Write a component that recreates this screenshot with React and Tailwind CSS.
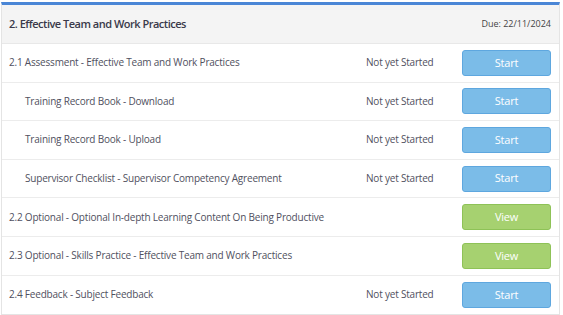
import React from "react";

const rows = [
  { label: "2.1 Assessment - Effective Team and Work Practices", status: "Not yet Started", action: "Start" },
  { label: "Training Record Book - Download", status: "Not yet Started", action: "Start", indent: true },
  { label: "Training Record Book - Upload", status: "Not yet Started", action: "Start", indent: true },
  { label: "Supervisor Checklist - Supervisor Competency Agreement", status: "Not yet Started", action: "Start", indent: true },
  { label: "2.2 Optional - Optional In-depth Learning Content On Being Productive", status: "", action: "View" },
  { label: "2.3 Optional - Skills Practice - Effective Team and Work Practices", status: "", action: "View" },
  { label: "2.4 Feedback - Subject Feedback", status: "Not yet Started", action: "Start" },
];

function ActionButton({ action }) {
  const cls =
    action === "View"
      ? "bg-[#a6d170] border-[#8ec257]"
      : "bg-[#7bbce8] border-[#5ea7df]";
  return (
    <button className={`${cls} border w-[89px] h-[26px] rounded-[3px] text-white text-[11px]`}>
      {action}
    </button>
  );
}

export default function App() {
  return (
    <div className="w-[563px] h-[315px] bg-white pt-[2px] px-[1px] font-['Open_Sans',sans-serif] text-[#505060]">
      <div className="w-[559px] border-t-[3px] border-[#4a86d6] border-x border-b border-x-[#e4e4e4] border-b-[#e4e4e4]">
        <div className="h-[39px] bg-[#f4f4f4] flex items-center justify-between pl-[7px] pr-[8px] border-b border-[#e8e8e8]">
          <span className="text-[11px] tracking-[-0.5px] font-semibold text-[#3a3a4a]">2. Effective Team and Work Practices</span>
          <span className="text-[9px] text-[#444]">Due: 22/11/2024</span>
        </div>
        {rows.map((r, i) => (
          <div
            key={i}
            className={`h-[38.6px] flex items-center text-[10px] tracking-[-0.2px] ${i < rows.length - 1 ? "border-b border-[#ececec]" : ""}`}
          >
            <span className={`flex-1 ${r.indent ? "pl-[23px]" : "pl-[7px]"}`}>{r.label}</span>
            <span className="w-[96px]">{r.status}</span>
            <div className="w-[97px] flex">
              <ActionButton action={r.action} />
            </div>
          </div>
        ))}
      </div>
    </div>
  );
}
